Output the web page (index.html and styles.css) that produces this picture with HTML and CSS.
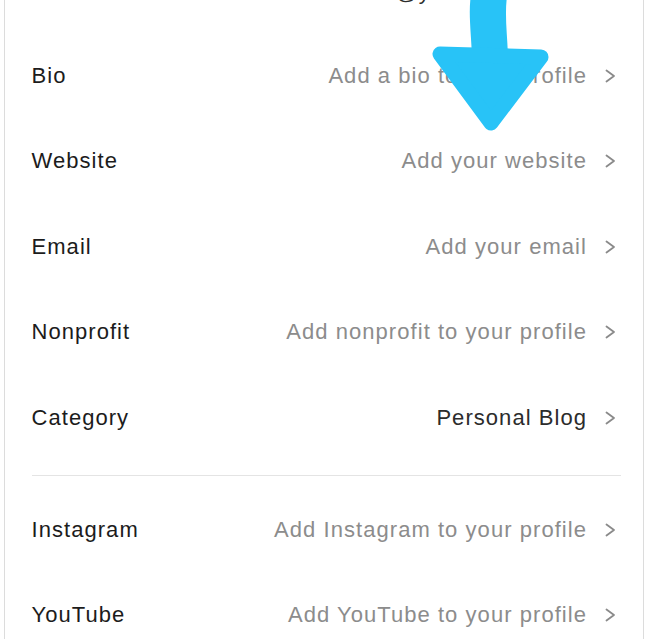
FILE: index.html
```html
<!DOCTYPE html>
<html lang="en">
<head>
<meta charset="utf-8">
<title>Edit profile</title>
<link rel="stylesheet" href="styles.css">
</head>
<body>
<div class="card">
  <div class="row row-top">
    <span class="label"></span>
    <span class="value value-dark">tiktok.com/@yourusername<svg class="copy" viewBox="0 0 14 14" width="14" height="14"><rect x="2" y="2" width="10" height="10" rx="2" fill="none" stroke="#555" stroke-width="1.8"/></svg></span>
  </div>
  <div class="section">
    <div class="row"><span class="label">Bio</span><span class="value">Add a bio to your profile<svg class="chev" viewBox="0 0 11 14" width="11" height="14"><polyline points="1.5,1.5 9,7 1.5,12.5" fill="none" stroke="#8a8a8a" stroke-width="1.8" stroke-linecap="round" stroke-linejoin="round"/></svg></span></div>
    <div class="row"><span class="label">Website</span><span class="value">Add your website<svg class="chev" viewBox="0 0 11 14" width="11" height="14"><polyline points="1.5,1.5 9,7 1.5,12.5" fill="none" stroke="#8a8a8a" stroke-width="1.8" stroke-linecap="round" stroke-linejoin="round"/></svg></span></div>
    <div class="row"><span class="label">Email</span><span class="value">Add your email<svg class="chev" viewBox="0 0 11 14" width="11" height="14"><polyline points="1.5,1.5 9,7 1.5,12.5" fill="none" stroke="#8a8a8a" stroke-width="1.8" stroke-linecap="round" stroke-linejoin="round"/></svg></span></div>
    <div class="row"><span class="label">Nonprofit</span><span class="value">Add nonprofit to your profile<svg class="chev" viewBox="0 0 11 14" width="11" height="14"><polyline points="1.5,1.5 9,7 1.5,12.5" fill="none" stroke="#8a8a8a" stroke-width="1.8" stroke-linecap="round" stroke-linejoin="round"/></svg></span></div>
    <div class="row"><span class="label">Category</span><span class="value value-dark">Personal Blog<svg class="chev" viewBox="0 0 11 14" width="11" height="14"><polyline points="1.5,1.5 9,7 1.5,12.5" fill="none" stroke="#8a8a8a" stroke-width="1.8" stroke-linecap="round" stroke-linejoin="round"/></svg></span></div>
  </div>
  <div class="divider"></div>
  <div class="section">
    <div class="row"><span class="label">Instagram</span><span class="value">Add Instagram to your profile<svg class="chev" viewBox="0 0 11 14" width="11" height="14"><polyline points="1.5,1.5 9,7 1.5,12.5" fill="none" stroke="#8a8a8a" stroke-width="1.8" stroke-linecap="round" stroke-linejoin="round"/></svg></span></div>
    <div class="row"><span class="label">YouTube</span><span class="value">Add YouTube to your profile<svg class="chev" viewBox="0 0 11 14" width="11" height="14"><polyline points="1.5,1.5 9,7 1.5,12.5" fill="none" stroke="#8a8a8a" stroke-width="1.8" stroke-linecap="round" stroke-linejoin="round"/></svg></span></div>
  </div>
</div>
<svg class="arrow" viewBox="0 0 646 140" width="646" height="140">
  <path d="M490 -10 C485 12, 490 35, 490 62" fill="none" stroke="#28c3f7" stroke-width="36" stroke-linecap="butt"/>
  <polygon points="440,54 541,57 491,123" fill="#28c3f7" stroke="#28c3f7" stroke-width="15" stroke-linejoin="round"/>
</svg>
</body>
</html>
```
FILE: styles.css
```css
html, body {
  margin: 0;
  padding: 0;
  background: #ffffff;
  overflow: hidden;
}

body {
  font-family: "Liberation Sans", Arial, sans-serif;
  position: relative;
  height: 639px;
}

.card {
  margin: -45px 2px 0 4px;
  border-left: 1.5px solid #dcdcdc;
  border-right: 1.5px solid #dcdcdc;
  padding: 0 27px 0 26.5px;
  background: #fff;
}

.row {
  display: flex;
  align-items: center;
  justify-content: space-between;
  height: 85.5px;
  font-size: 22px;
  letter-spacing: 1.05px;
}

.row-top {
  box-sizing: border-box;
  height: 77.75px;
  align-items: flex-start;
  padding-top: 24px;
}

.label {
  color: #1c1c1c;
}

.value {
  display: flex;
  align-items: center;
  color: #8c8c8c;
}

.value-dark {
  color: #2c2c2c;
}

.chev {
  margin-left: 18px;
  display: block;
}

.copy {
  margin-left: 30px;
  display: block;
}

.divider {
  height: 1px;
  background: #e4e4e4;
  margin: 15px -5px 10.5px 0;
}

.arrow {
  position: absolute;
  top: 0;
  left: 0;
  pointer-events: none;
}
```
